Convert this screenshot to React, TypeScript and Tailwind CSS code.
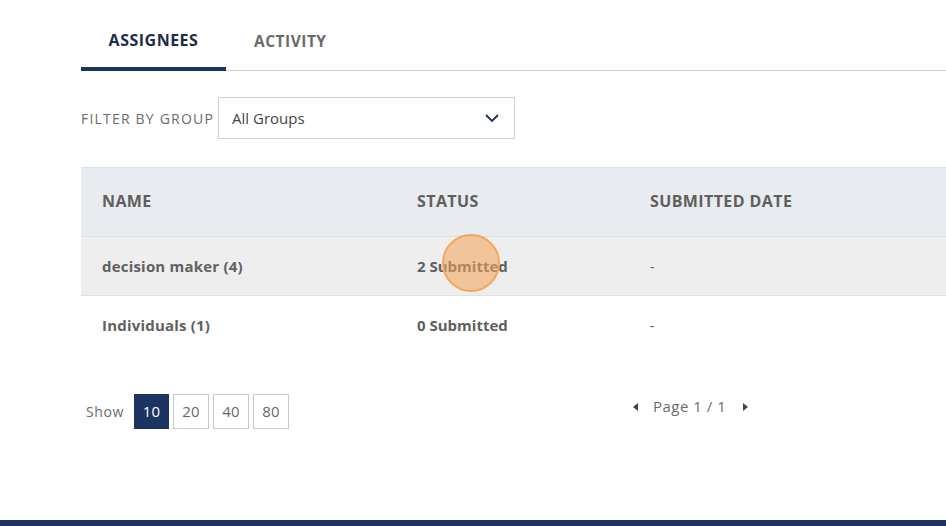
import React from "react";

const rows = [
  { name: "decision maker (4)", status: "2 Submitted", date: "-", hover: true },
  { name: "Individuals (1)", status: "0 Submitted", date: "-", hover: false },
];

export default function App() {
  return (
    <div
      className="relative w-[946px] h-[526px] bg-white overflow-hidden flex flex-col"
      style={{ fontFamily: '"Open Sans", "Liberation Sans", sans-serif' }}
    >
      <div className="flex-1 pl-[81px]">
        {/* Tabs */}
        <div className="flex border-b border-[#cfcfcf] h-[71px]">
          <div className="h-[71px] w-[145px] flex items-center justify-center border-b-[4px] border-[#1b3461] -mb-px pt-[13px]">
            <span className="text-[16px] font-bold tracking-[0.5px] text-[#1d2c4c]">ASSIGNEES</span>
          </div>
          <div className="h-[71px] pl-[28px] pr-[20px] flex items-center justify-center pt-[13px]">
            <span className="text-[15.5px] font-bold tracking-[0.5px] text-[#6a6a6a]">ACTIVITY</span>
          </div>
        </div>

        {/* Filter */}
        <div className="mt-[26px] flex items-center h-[42px]">
          <span className="text-[14px] tracking-[1.2px] text-[#6b6b6b] mr-[4px]">FILTER BY GROUP</span>
          <div className="w-[297px] h-[42px] border border-[#cfcfcf] flex items-center justify-between pl-[13px] pr-[14px]">
            <span className="text-[15px] text-[#444]">All Groups</span>
            <svg width="16" height="10" viewBox="0 0 16 10" fill="none">
              <path d="M2 2l6 6 6-6" stroke="#1d2c4c" strokeWidth="1.8" />
            </svg>
          </div>
        </div>

        {/* Table */}
        <div className="mt-[28px] border-t border-[#dde1e6]">
          <div className="grid grid-cols-[336px_233px_1fr] h-[69px] items-center bg-[#e8ebef] border-b border-[#dde1e6]">
            <span className="pl-[21px] -mt-[2px] text-[16px] font-bold tracking-[0.4px] text-[#5f5f5f]">NAME</span>
            <span className="-mt-[2px] text-[16px] font-bold tracking-[0.4px] text-[#5f5f5f]">STATUS</span>
            <span className="-mt-[2px] text-[16px] font-bold tracking-[0.4px] text-[#5f5f5f]">SUBMITTED DATE</span>
          </div>
          {rows.map((r, i) => (
            <div
              key={i}
              className={
                "grid grid-cols-[336px_233px_1fr] h-[59px] items-center " +
                (r.hover ? "bg-[#eeeeee] border-b border-[#e0e0e0]" : "bg-white")
              }
            >
              <span className="pl-[21px] text-[15px] font-bold tracking-[0.2px] text-[#606060]">{r.name}</span>
              <span className="text-[15px] font-bold text-[#606060]">{r.status}</span>
              <span className="text-[14px] text-[#606060]">{r.date}</span>
            </div>
          ))}
        </div>

        {/* Pagination */}
        <div className="mt-[39px] flex items-center">
          <div className="flex items-center w-[544px] pl-[5px]">
            <span className="text-[14px] tracking-[0.6px] text-[#6b6b6b] mr-[10px]">Show</span>
            <div className="flex gap-[4px]">
              <span className="w-[35px] h-[35px] flex items-center justify-center bg-[#1b3461] text-white text-[15px]">10</span>
              {["20", "40", "80"].map((n) => (
                <span key={n} className="w-[36px] h-[35px] flex items-center justify-center border border-[#c9c9c9] text-[#666] text-[15px]">
                  {n}
                </span>
              ))}
            </div>
          </div>
          <div className="flex items-center -mt-[10px] ml-[7px]">
            <svg width="8" height="10" viewBox="0 0 8 10"><path d="M6 1L1 5l5 4z" fill="#444" /></svg>
            <span className="ml-[13px] mr-[15px] text-[15px] tracking-[0.5px] text-[#6b6b6b]">Page 1 / 1</span>
            <svg width="8" height="10" viewBox="0 0 8 10"><path d="M2 1l5 4-5 4z" fill="#444" /></svg>
          </div>
        </div>
      </div>

      <div className="h-[6px] bg-[#1d3461]" />

      {/* click indicator */}
      <div className="absolute left-[442px] top-[234px] w-[58px] h-[58px] rounded-full border-2 border-[#f4a85f] bg-[#f5a35a]/55" />
    </div>
  );
}
